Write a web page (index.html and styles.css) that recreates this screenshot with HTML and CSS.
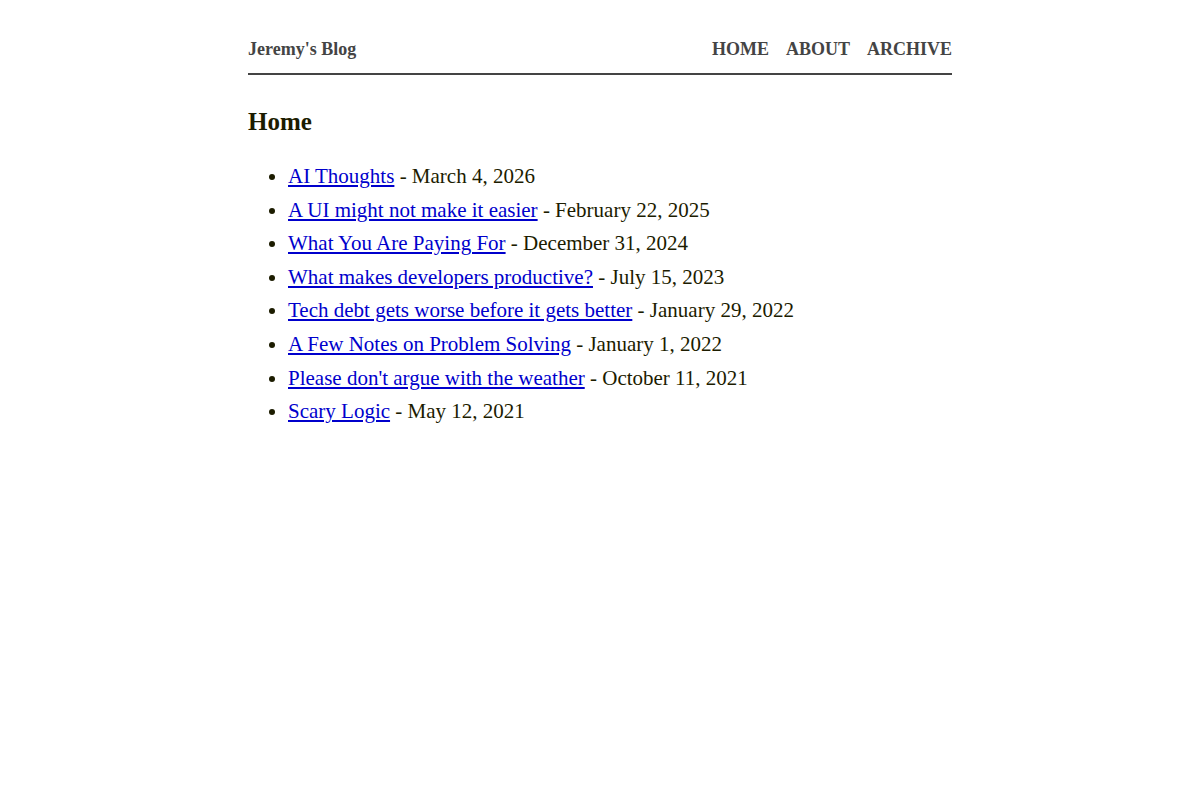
FILE: index.html
```html
<!DOCTYPE html>
<html lang="en">

<head>
    <meta charset="UTF-8">
    <meta name="viewport" content="width=device-width, initial-scale=1.0">
    <title>Jeremy's Blog</title>
    <link rel="stylesheet" href="styles.css">
</head>

<body>
    <div class="container">
        <!-- Site header -->
        <header class="site-header">
            <a class="brand" href="#">Jeremy's Blog</a>
            <nav class="nav">
                <a href="#">HOME</a>
                <a href="#">ABOUT</a>
                <a href="#">ARCHIVE</a>
            </nav>
        </header>

        <!-- Post list -->
        <main>
            <h1 class="page-title">Home</h1>
            <ul class="posts">
                <li><a href="#">AI Thoughts</a> - March 4, 2026</li>
                <li><a href="#">A UI might not make it easier</a> - February 22, 2025</li>
                <li><a href="#">What You Are Paying For</a> - December 31, 2024</li>
                <li><a href="#">What makes developers productive?</a> - July 15, 2023</li>
                <li><a href="#">Tech debt gets worse before it gets better</a> - January 29, 2022</li>
                <li><a href="#">A Few Notes on Problem Solving</a> - January 1, 2022</li>
                <li><a href="#">Please don't argue with the weather</a> - October 11, 2021</li>
                <li><a href="#">Scary Logic</a> - May 12, 2021</li>
            </ul>
        </main>
    </div>
</body>

</html>
```

FILE: styles.css
```css
body {
    margin: 0;
    font-family: "Liberation Serif", "Times New Roman", serif;
    color: #1c1c00;
    background: #fff;
}

.container {
    width: 704px;
    margin: 0 auto;
}

.site-header {
    display: flex;
    justify-content: space-between;
    align-items: baseline;
    padding: 39px 0 13px;
    border-bottom: 2px solid #444;
    font-size: 18px;
    line-height: 21px;
    font-weight: bold;
}

.site-header a {
    color: #444;
    text-decoration: none;
}

.nav {
    display: flex;
    gap: 17px;
    font-size: 18px;
}

.page-title {
    font-size: 25px;
    line-height: 29px;
    margin: 32px 0 24px;
}

.posts {
    margin: 0;
    padding-left: 40px;
    font-size: 21px;
    line-height: 33.6px;
}

.posts a {
    color: #0000cc;
}
```
